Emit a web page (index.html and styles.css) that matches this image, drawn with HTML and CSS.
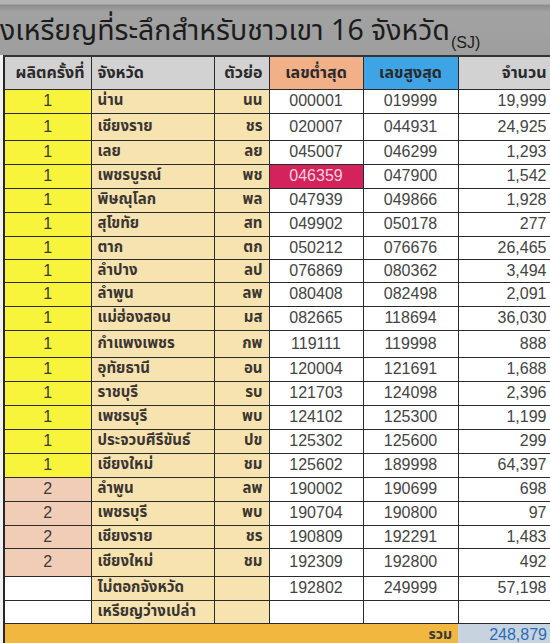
FILE: index.html
```html
<!DOCTYPE html>
<html lang="th">
<head>
<meta charset="utf-8">
<title>เหรียญที่ระลึกสำหรับชาวเขา 16 จังหวัด</title>
<link rel="stylesheet" href="styles.css">
</head>
<body>
<div class="sheet">
  <div class="title">งเหรียญที่ระลึกสำหรับชาวเขา 16 จังหวัด<span class="sub">(SJ)</span></div>
  <table class="grid">
    <colgroup>
      <col class="c1"><col class="c2"><col class="c3"><col class="c4"><col class="c5"><col class="c6">
    </colgroup>
    <thead>
      <tr class="head">
        <th class="h-run">ผลิตครั้งที่</th>
        <th class="h-prov">จังหวัด</th>
        <th class="h-abbr">ตัวย่อ</th>
        <th class="h-low">เลขต่ำสุด</th>
        <th class="h-high">เลขสูงสุด</th>
        <th class="h-count">จำนวน</th>
      </tr>
    </thead>
    <tbody>
      <tr><td class="run one">1</td><td class="prov">น่าน</td><td class="abbr">นน</td><td class="num">000001</td><td class="num">019999</td><td class="count">19,999</td></tr>
      <tr class="tall"><td class="run one">1</td><td class="prov">เชียงราย</td><td class="abbr">ชร</td><td class="num">020007</td><td class="num">044931</td><td class="count">24,925</td></tr>
      <tr><td class="run one">1</td><td class="prov">เลย</td><td class="abbr">ลย</td><td class="num">045007</td><td class="num">046299</td><td class="count">1,293</td></tr>
      <tr><td class="run one">1</td><td class="prov">เพชรบูรณ์</td><td class="abbr">พช</td><td class="num mark">046359</td><td class="num">047900</td><td class="count">1,542</td></tr>
      <tr><td class="run one">1</td><td class="prov">พิษณุโลก</td><td class="abbr">พล</td><td class="num">047939</td><td class="num">049866</td><td class="count">1,928</td></tr>
      <tr><td class="run one">1</td><td class="prov">สุโขทัย</td><td class="abbr">สท</td><td class="num">049902</td><td class="num">050178</td><td class="count">277</td></tr>
      <tr class="short"><td class="run one">1</td><td class="prov">ตาก</td><td class="abbr">ตก</td><td class="num">050212</td><td class="num">076676</td><td class="count">26,465</td></tr>
      <tr class="short"><td class="run one">1</td><td class="prov">ลำปาง</td><td class="abbr">ลป</td><td class="num">076869</td><td class="num">080362</td><td class="count">3,494</td></tr>
      <tr><td class="run one">1</td><td class="prov">ลำพูน</td><td class="abbr">ลพ</td><td class="num">080408</td><td class="num">082498</td><td class="count">2,091</td></tr>
      <tr><td class="run one">1</td><td class="prov">แม่ฮ่องสอน</td><td class="abbr">มส</td><td class="num">082665</td><td class="num">118694</td><td class="count">36,030</td></tr>
      <tr class="tall"><td class="run one">1</td><td class="prov">กำแพงเพชร</td><td class="abbr">กพ</td><td class="num">119111</td><td class="num">119998</td><td class="count">888</td></tr>
      <tr><td class="run one">1</td><td class="prov">อุทัยธานี</td><td class="abbr">อน</td><td class="num">120004</td><td class="num">121691</td><td class="count">1,688</td></tr>
      <tr><td class="run one">1</td><td class="prov">ราชบุรี</td><td class="abbr">รบ</td><td class="num">121703</td><td class="num">124098</td><td class="count">2,396</td></tr>
      <tr><td class="run one">1</td><td class="prov">เพชรบุรี</td><td class="abbr">พบ</td><td class="num">124102</td><td class="num">125300</td><td class="count">1,199</td></tr>
      <tr><td class="run one">1</td><td class="prov">ประจวบศีรีขันธ์</td><td class="abbr">ปข</td><td class="num">125302</td><td class="num">125600</td><td class="count">299</td></tr>
      <tr><td class="run one">1</td><td class="prov">เชียงใหม่</td><td class="abbr">ชม</td><td class="num">125602</td><td class="num">189998</td><td class="count">64,397</td></tr>
      <tr><td class="run two">2</td><td class="prov">ลำพูน</td><td class="abbr">ลพ</td><td class="num">190002</td><td class="num">190699</td><td class="count">698</td></tr>
      <tr><td class="run two">2</td><td class="prov">เพชรบุรี</td><td class="abbr">พบ</td><td class="num">190704</td><td class="num">190800</td><td class="count">97</td></tr>
      <tr class="short"><td class="run two">2</td><td class="prov">เชียงราย</td><td class="abbr">ชร</td><td class="num">190809</td><td class="num">192291</td><td class="count">1,483</td></tr>
      <tr class="taller"><td class="run two">2</td><td class="prov">เชียงใหม่</td><td class="abbr">ชม</td><td class="num">192309</td><td class="num">192800</td><td class="count">492</td></tr>
      <tr><td class="run"></td><td class="prov">ไม่ตอกจังหวัด</td><td class="abbr"></td><td class="num">192802</td><td class="num">249999</td><td class="count">57,198</td></tr>
      <tr class="short"><td class="run"></td><td class="prov">เหรียญว่างเปล่า</td><td class="abbr"></td><td class="num"></td><td class="num"></td><td class="count"></td></tr>
    </tbody>
    <tfoot>
      <tr class="total"><td class="total-label" colspan="5">รวม</td><td class="total-value">248,879</td></tr>
    </tfoot>
  </table>
</div>
</body>
</html>
```

FILE: styles.css
```css
html, body {
  margin: 0;
  padding: 0;
  background: #ffffff;
}

body {
  width: 550px;
  height: 643px;
  overflow: hidden;
  font-family: "Noto Sans Thai", "Tahoma", "Loma", "Garuda", "Liberation Sans", sans-serif;
  color: #2c2c2c;
}

.sheet {
  width: 550px;
  background: #f2f2f2;
}

.title {
  height: 55px;
  box-sizing: border-box;
  padding: 14px 0 0 0;
  background: linear-gradient(#b4b4b4 0, #b4b4b4 4px, #8c8c8c 5px, #a2a2a2 12px, #9e9e9e 100%);
  font-size: 28.5px;
  line-height: 36px;
  color: #1c1c1c;
  white-space: nowrap;
  overflow: hidden;
}

.title .sub {
  font-family: "Liberation Sans", sans-serif;
  font-size: 16px;
  position: relative;
  top: 8px;
  margin-left: 1px;
}

.grid {
  border-collapse: collapse;
  table-layout: fixed;
  width: 549px;
  margin-left: 3px;
  border-left: 2px solid #262626;
}

.grid col.c1 { width: 87px; }
.grid col.c2 { width: 123px; }
.grid col.c3 { width: 55px; }
.grid col.c4 { width: 94px; }
.grid col.c5 { width: 95px; }
.grid col.c6 { width: 95px; }

.grid th,
.grid td {
  border: 1.5px solid #2a2a2a;
  padding: 0 6px;
  white-space: nowrap;
  overflow: hidden;
}

.head {
  height: 33px;
}

.head th {
  background: #d2d2d2;
  font-weight: bold;
  font-size: 16px;
  color: #2a2a2a;
  border-top: 2px solid #333;
}

.h-run { text-align: right; padding-right: 4px; }
.h-prov { text-align: left; }
.h-abbr { text-align: right; }
.h-low { background: #f2b089 !important; text-align: center; }
.h-high { background: #3ea4e6 !important; text-align: center; }
.h-count { text-align: right; padding-right: 4px; }

tbody tr { height: 24px; }
tbody tr.short { height: 23px; }
tbody tr.tall { height: 27px; }
tbody tr.taller { height: 28px; }

tbody td {
  font-size: 15px;
  line-height: 18px;
  padding-top: 2px;
}

.run {
  text-align: center;
  background: #ffffff;
  font-family: "Liberation Sans", sans-serif;
  font-size: 16px;
  color: #3a3a3a;
}

.run.one { background: #f8f43c; }
.run.two { background: #f1ccb7; }

.prov {
  background: #f6e3b0;
  text-align: left;
  font-weight: bold;
  color: #3a3530;
}

.abbr {
  background: #f6e3b0;
  text-align: right;
  font-weight: bold;
  color: #3a3530;
}

.num {
  background: #ffffff;
  text-align: center;
  font-family: "Liberation Sans", sans-serif;
  font-size: 16px;
  color: #444444;
}

.num.mark {
  background: #d4235c;
  color: #f4d2dc;
}

.count {
  background: #ffffff;
  text-align: right;
  font-family: "Liberation Sans", sans-serif;
  font-size: 16px;
  color: #444444;
  padding-right: 4px;
}

.total { height: 22px; }

.total td {
  vertical-align: top;
  padding-top: 2px;
  line-height: 18px;
}

.total-label {
  background: #f1b73e;
  text-align: right;
  font-weight: bold;
  font-size: 14px;
  color: #3a3a3a;
  border: none !important;
  padding-right: 6px;
}

.total-value {
  background: #c7d3df;
  text-align: right;
  font-family: "Liberation Sans", sans-serif;
  font-size: 16px;
  color: #2a6db3;
  border: none !important;
  padding-right: 4px;
}
```
